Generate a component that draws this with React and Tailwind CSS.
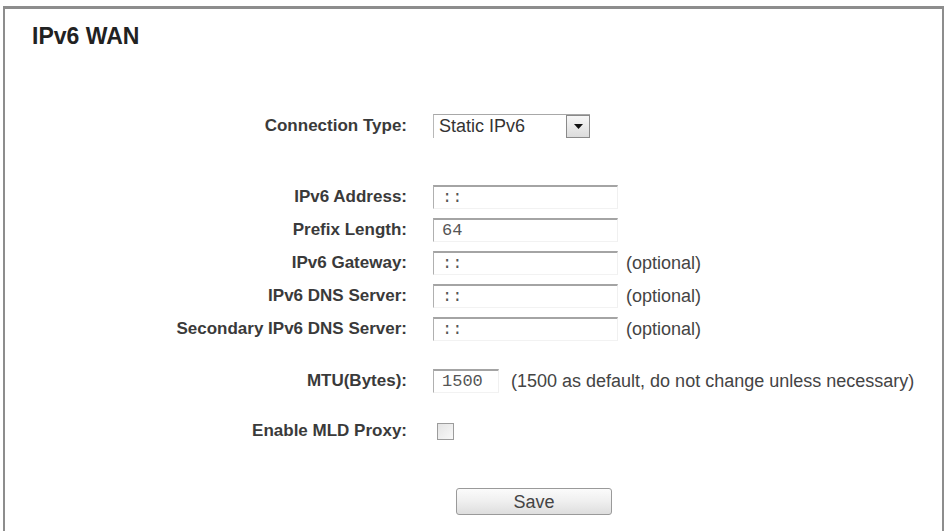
import React from "react";

const labelCls = "w-[402px] shrink-0 text-right font-bold text-[17px] text-[#3a3a3a]";
const font = { fontFamily: '"Liberation Sans", Arial, sans-serif' };

function TextField({ value, width = "w-[185px]" }) {
  return (
    <div
      className={`${width} h-[24px] flex items-center pl-[8px] bg-white border-t-2 border-l border-r border-b border-t-[#a4a4a4] border-l-[#b0b0b0] border-r-[#f0f0f0] border-b-[#f2f2f2] text-[17px] text-[#555]`}
      style={{ fontFamily: '"Liberation Mono", "DejaVu Sans Mono", monospace' }}
    >
      {value}
    </div>
  );
}

function Row({ label, children, className = "" }) {
  return (
    <div className={`flex items-center h-[24px] ${className}`}>
      <div className={labelCls}>{label}</div>
      <div className="ml-[26px] flex items-center">{children}</div>
    </div>
  );
}

function Note({ children, className = "ml-[8px]" }) {
  return <span className={`${className} text-[18px] text-[#444]`}>{children}</span>;
}

export default function App() {
  return (
    <div className="w-[945px] h-[531px] overflow-hidden bg-white" style={font}>
      <div className="mt-[6px] ml-[3px] w-[941px] h-[600px] border-t-[3px] border-l-2 border-r-2 border-[#8d8d8d] bg-white">
        <div className="pt-[14px] pl-[27px] h-[40px] leading-[26px] text-[23px] font-bold text-[#222]">
          IPv6 WAN
        </div>

        <div className="mt-[65px] flex flex-col">
          <Row label="Connection Type:">
            <div className="w-[157px] h-[24px] flex items-center bg-white border-t border-l border-t-[#a8a8a8] border-l-[#b8b8b8]">
              <span className="pl-[5px] flex-1 text-[18px] text-[#333]">Static IPv6</span>
              <div className="w-[24px] h-[23px] flex items-center justify-center border border-[#8a8a8a] bg-gradient-to-b from-[#f7f7f7] to-[#dcdcdc]">
                <svg width="9" height="5" viewBox="0 0 9 5">
                  <path d="M0 0 H9 L4.5 5 Z" fill="#111" />
                </svg>
              </div>
            </div>
          </Row>

          <div className="mt-[47px] flex flex-col gap-[9px]">
            <Row label="IPv6 Address:">
              <TextField value="::" />
            </Row>
            <Row label="Prefix Length:">
              <TextField value="64" />
            </Row>
            <Row label="IPv6 Gateway:">
              <TextField value="::" />
              <Note>(optional)</Note>
            </Row>
            <Row label="IPv6 DNS Server:">
              <TextField value="::" />
              <Note>(optional)</Note>
            </Row>
            <Row label="Secondary IPv6 DNS Server:">
              <TextField value="::" />
              <Note>(optional)</Note>
            </Row>
          </div>

          <Row label="MTU(Bytes):" className="mt-[28px]">
            <TextField value="1500" width="w-[66px]" />
            <Note className="ml-[12px]">(1500 as default, do not change unless necessary)</Note>
          </Row>

          <Row label="Enable MLD Proxy:" className="mt-[26px]">
            <div className="ml-[4px] w-[17px] h-[17px] border border-[#9c9c9c] bg-gradient-to-br from-[#e4e4e4] to-[#f8f8f8]" />
          </Row>

          <div className="mt-[45px] pl-[451px]">
            <button className="w-[156px] h-[27px] rounded-[3px] border border-[#9a9a9a] bg-gradient-to-b from-[#fbfbfb] via-[#efefef] to-[#dedede] text-[18px] text-[#444] leading-none">
              Save
            </button>
          </div>
        </div>
      </div>
    </div>
  );
}
